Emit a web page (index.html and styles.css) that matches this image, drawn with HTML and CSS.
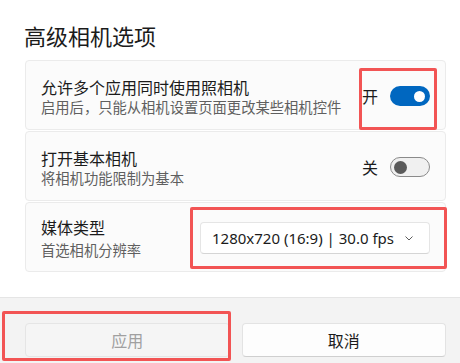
FILE: index.html
```html
<!DOCTYPE html>
<html lang="zh-CN">

<head>
    <meta charset="UTF-8">
    <meta name="viewport" content="width=device-width, initial-scale=1.0">
    <link rel="stylesheet" href="styles.css">
</head>

<body>
    <div id="dialog">
        <div class="content">
            <h1 class="heading">高级相机选项</h1>
            <div class="cards">
                <div class="card">
                    <div class="card-text">
                        <span class="card-title">允许多个应用同时使用照相机</span>
                        <span class="card-sub">启用后，只能从相机设置页面更改某些相机控件</span>
                    </div>
                    <div class="toggle-wrap">
                        <span class="toggle-label">开</span>
                        <span class="toggle on"><span class="knob"></span></span>
                    </div>
                </div>
                <div class="card">
                    <div class="card-text">
                        <span class="card-title">打开基本相机</span>
                        <span class="card-sub">将相机功能限制为基本</span>
                    </div>
                    <div class="toggle-wrap">
                        <span class="toggle-label">关</span>
                        <span class="toggle off"><span class="knob"></span></span>
                    </div>
                </div>
                <div class="card">
                    <div class="card-text tall">
                        <span class="card-title">媒体类型</span>
                        <span class="card-sub">首选相机分辨率</span>
                    </div>
                    <div class="dropdown">
                        <span class="dropdown-value">1280x720 (16:9) | 30.0 fps</span>
                        <svg width="8" height="5" viewBox="0 0 8 5" xmlns="http://www.w3.org/2000/svg">
                            <path d="M0.5 0.5L4 4L7.5 0.5" fill="none" stroke="#5c5c5c" stroke-width="1" />
                        </svg>
                    </div>
                </div>
            </div>
        </div>
        <div class="footer">
            <button class="btn disabled">应用</button>
            <button class="btn">取消</button>
        </div>
    </div>

    <!-- annotation boxes -->
    <div class="mark mark-toggle"></div>
    <div class="mark mark-dropdown"></div>
    <div class="mark mark-apply"></div>
</body>

</html>
```

FILE: styles.css
```css
body {
    margin: 0;
    padding: 0;
    background: #ffffff;
    font-family: "Noto Sans", "Noto Sans CJK SC", sans-serif;
    color: #1b1b1b;
    user-select: none;
}

#dialog {
    display: flex;
    flex-direction: column;
    height: 363px;
    width: 460px;
}

.content {
    flex: 1;
    padding: 0 14px 0 25px;
}

.heading {
    font-size: 22px;
    font-weight: 400;
    height: 30px;
    line-height: 30px;
    margin: 21px 0 9px -1px;
}

.cards {
    display: flex;
    flex-direction: column;
    gap: 1px;
}

.card {
    align-items: center;
    background: #fbfbfb;
    border: 1px solid #ebebeb;
    border-radius: 4px;
    box-sizing: border-box;
    display: flex;
    height: 70px;
    padding: 2px 15px 0 15px;
}

.card-text {
    display: flex;
    flex: 1;
    flex-direction: column;
    padding-top: 3px;
}

.card-text.tall {
    gap: 3px;
}

.card-title {
    font-size: 16px;
    line-height: 19px;
}

.card-sub {
    color: #5f5f5f;
    font-size: 14.3px;
    line-height: 19px;
}

.toggle-wrap {
    align-items: center;
    display: flex;
    gap: 12px;
}

.toggle-label {
    font-size: 16px;
}

.toggle {
    border-radius: 10px;
    box-sizing: border-box;
    display: flex;
    height: 20px;
    position: relative;
    width: 40px;
}

.toggle.on {
    background: #0067c0;
}

.toggle.off {
    background: #f0f0f0;
    border: 1px solid #8a8a8a;
}

.knob {
    border-radius: 50%;
    position: absolute;
}

.toggle.on .knob {
    background: #ffffff;
    height: 11px;
    right: 5px;
    top: 4.5px;
    width: 11px;
}

.toggle.off .knob {
    background: #5a5a5a;
    height: 13px;
    left: 3px;
    top: 2.5px;
    width: 13px;
}

.dropdown {
    align-items: center;
    background: #ffffff;
    border: 1px solid #e5e5e5;
    border-bottom-color: #d5d5d5;
    border-radius: 4px;
    box-sizing: border-box;
    display: flex;
    height: 32px;
    justify-content: space-between;
    padding: 0 16px 0 11px;
    width: 230px;
}

.dropdown-value {
    font-size: 15px;
}

.footer {
    background: #f3f3f3;
    border-top: 1px solid #e5e5e5;
    box-sizing: border-box;
    display: flex;
    gap: 12px;
    height: 66px;
    padding: 25px 14px 0 25px;
}

.btn {
    background: #fdfdfd;
    border: 1px solid #e3e3e3;
    border-bottom-color: #cfcfcf;
    border-radius: 4px;
    color: #1b1b1b;
    flex: 1;
    font-family: "Noto Sans", "Noto Sans CJK SC", sans-serif;
    font-size: 16px;
    height: 34px;
    padding: 0;
}

.btn.disabled {
    background: #f5f5f5;
    border-color: #e5e5e5;
    color: #a0a0a0;
}

.mark {
    border: 3px solid #f25454;
    border-radius: 2px;
    box-sizing: border-box;
    position: absolute;
}

.mark-toggle {
    height: 62px;
    left: 359px;
    top: 68px;
    width: 78px;
}

.mark-dropdown {
    height: 62px;
    left: 190px;
    top: 207px;
    width: 257px;
}

.mark-apply {
    height: 50px;
    left: 2px;
    top: 311px;
    width: 229px;
}
```
